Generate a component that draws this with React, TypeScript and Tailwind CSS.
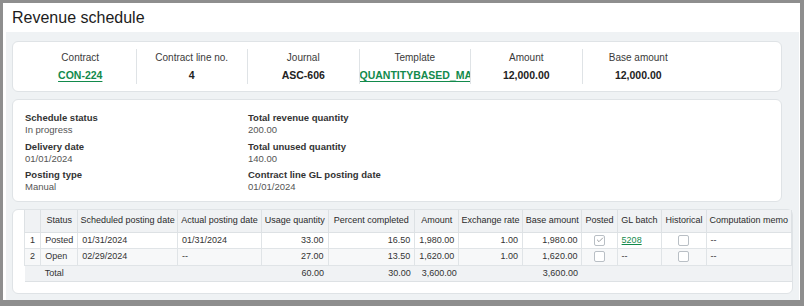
import { Check } from 'lucide-react'

const summary = [
  { label: 'Contract', value: 'CON-224', link: true },
  { label: 'Contract line no.', value: '4' },
  { label: 'Journal', value: 'ASC-606' },
  { label: 'Template', value: 'QUANTITYBASED_MANUAL', link: true, clip: true },
  { label: 'Amount', value: '12,000.00' },
  { label: 'Base amount', value: '12,000.00' }
]

const details = [
  [
    { label: 'Schedule status', value: 'In progress' },
    { label: 'Delivery date', value: '01/01/2024' },
    { label: 'Posting type', value: 'Manual' }
  ],
  [
    { label: 'Total revenue quantity', value: '200.00' },
    { label: 'Total unused quantity', value: '140.00' },
    { label: 'Contract line GL posting date', value: '01/01/2024' }
  ]
]

const cols = [
  { h: '', w: 'w-[17px]' },
  { h: 'Status', w: 'w-[37px]' },
  { h: 'Scheduled posting date', w: 'w-[100px]' },
  { h: 'Actual posting date', w: 'w-[85px]' },
  { h: 'Usage quantity', w: 'w-[67px]' },
  { h: 'Percent completed', w: 'w-[89px]' },
  { h: 'Amount', w: 'w-[36px]' },
  { h: 'Exchange rate', w: 'w-[64px]' },
  { h: 'Base amount', w: 'w-[60px]' },
  { h: 'Posted', w: 'w-[36px]' },
  { h: 'GL batch', w: 'w-[46px]' },
  { h: 'Historical', w: 'w-[45px]' },
  { h: 'Computation memo', w: 'w-[86px]' }
]

const rows = [
  { n: '1', status: 'Posted', sched: '01/31/2024', actual: '01/31/2024', usage: '33.00', pct: '16.50', amount: '1,980.00', rate: '1.00', base: '1,980.00', posted: true, batch: '5208' },
  { n: '2', status: 'Open', sched: '02/29/2024', actual: '--', usage: '27.00', pct: '13.50', amount: '1,620.00', rate: '1.00', base: '1,620.00', posted: false, batch: '' }
]

function Box({ checked }: { checked?: boolean }) {
  return (
    <span className="mx-auto flex h-[11px] w-[11px] items-center justify-center rounded-[2px] border border-[#b9bfc5] bg-white">
      {checked && <Check className="h-[8px] w-[8px] text-[#6b7075]" strokeWidth={2} />}
    </span>
  )
}

export default function App() {
  const td = 'border border-[#e0e4e7] px-[4px] leading-[15px]'
  return (
    <div className="h-[306px] w-[804px] bg-[#8e8e8e] pb-[6px] pl-[3px] pr-[4px] pt-[3px] font-['Liberation_Sans',Arial,sans-serif] text-[#2b2b2b]">
      <div className="flex h-full flex-col bg-white">
        <div className="flex h-[29px] items-center px-[9px] text-[16px] text-[#1c1c1c]">Revenue schedule</div>

        <div className="ml-[3px] mr-px flex flex-1 flex-col overflow-hidden bg-[#eff2f4] pl-[6px] pr-[6px] pt-[9px]">
          <div className="flex h-[51px] w-[770px] items-center rounded-md border border-[#dfe3e6] bg-white pl-[12px]">
            {summary.map((s, i) => (
              <div
                key={s.label}
                className={`flex h-[35px] w-[111.5px] flex-col items-center ${i < 5 ? 'border-r border-[#dfe3e6]' : ''}`}
              >
                <span className="mt-[3px] text-[10px] leading-[12px] text-[#3a3a3a]">{s.label}</span>
                <span
                  className={`mt-[4px] text-[10.5px] font-bold leading-[14px] ${s.link ? 'text-[#128a4c] underline underline-offset-2' : 'text-[#222]'} ${
                    s.clip ? 'w-full overflow-hidden whitespace-nowrap text-left' : ''
                  }`}
                >
                  {s.value}
                </span>
              </div>
            ))}
          </div>

          <div className="mt-[7px] flex h-[103px] w-[770px] rounded-md border border-[#dfe3e6] bg-white pl-[12px] pt-[12px]">
            {details.map((col, i) => (
              <div key={i} className={`flex flex-col gap-[4.5px] ${i === 0 ? 'w-[223px]' : ''}`}>
                {col.map((d) => (
                  <div key={d.label} className="flex flex-col">
                    <span className="text-[9.5px] font-semibold leading-[12px] text-[#333]">{d.label}</span>
                    <span className="text-[9.5px] leading-[12px] text-[#555]">{d.value}</span>
                  </div>
                ))}
              </div>
            ))}
          </div>

          <div className="mb-[6px] mt-[7px] flex-1 rounded-md border border-[#dfe3e6] bg-white pl-[11px]">
            <table className="table-fixed border-collapse text-[9px] text-[#333]">
              <colgroup>
                {cols.map((c, i) => (
                  <col key={i} className={c.w} />
                ))}
              </colgroup>
              <thead>
                <tr className="h-[22px] bg-[#f0f2f4]">
                  {cols.map((c, i) => (
                    <th key={i} className="border-x border-b border-[#dde1e4] px-[2px] text-center font-normal whitespace-nowrap text-[#2b2b2b]">
                      {c.h}
                    </th>
                  ))}
                </tr>
              </thead>
              <tbody>
                {rows.map((r, i) => (
                  <tr key={r.n} className={`h-[16.5px] ${i === 1 ? 'bg-[#f7f8f9]' : 'bg-white'}`}>
                    <td className={`${td} text-center`}>{r.n}</td>
                    <td className={td}>{r.status}</td>
                    <td className={td}>{r.sched}</td>
                    <td className={td}>{r.actual}</td>
                    <td className={`${td} text-right`}>{r.usage}</td>
                    <td className={`${td} text-right`}>{r.pct}</td>
                    <td className={`${td} px-[2px] text-right`}>{r.amount}</td>
                    <td className={`${td} text-right`}>{r.rate}</td>
                    <td className={`${td} text-right`}>{r.base}</td>
                    <td className={td}>
                      <Box checked={r.posted} />
                    </td>
                    <td className={td}>
                      {r.batch ? <span className="text-[#128a4c] underline underline-offset-1">{r.batch}</span> : '--'}
                    </td>
                    <td className={td}>
                      <Box />
                    </td>
                    <td className={td}>--</td>
                  </tr>
                ))}
                <tr className="h-[16.5px] border-b border-[#dde1e4] bg-[#f0f2f4]">
                  <td />
                  <td colSpan={3} className="px-[4px]">Total</td>
                  <td className="px-[4px] text-right">60.00</td>
                  <td className="px-[4px] text-right">30.00</td>
                  <td className="px-[2px] text-right">3,600.00</td>
                  <td />
                  <td className="px-[4px] text-right">3,600.00</td>
                  <td colSpan={4} />
                </tr>
              </tbody>
            </table>
          </div>
        </div>
      </div>
    </div>
  )
}
